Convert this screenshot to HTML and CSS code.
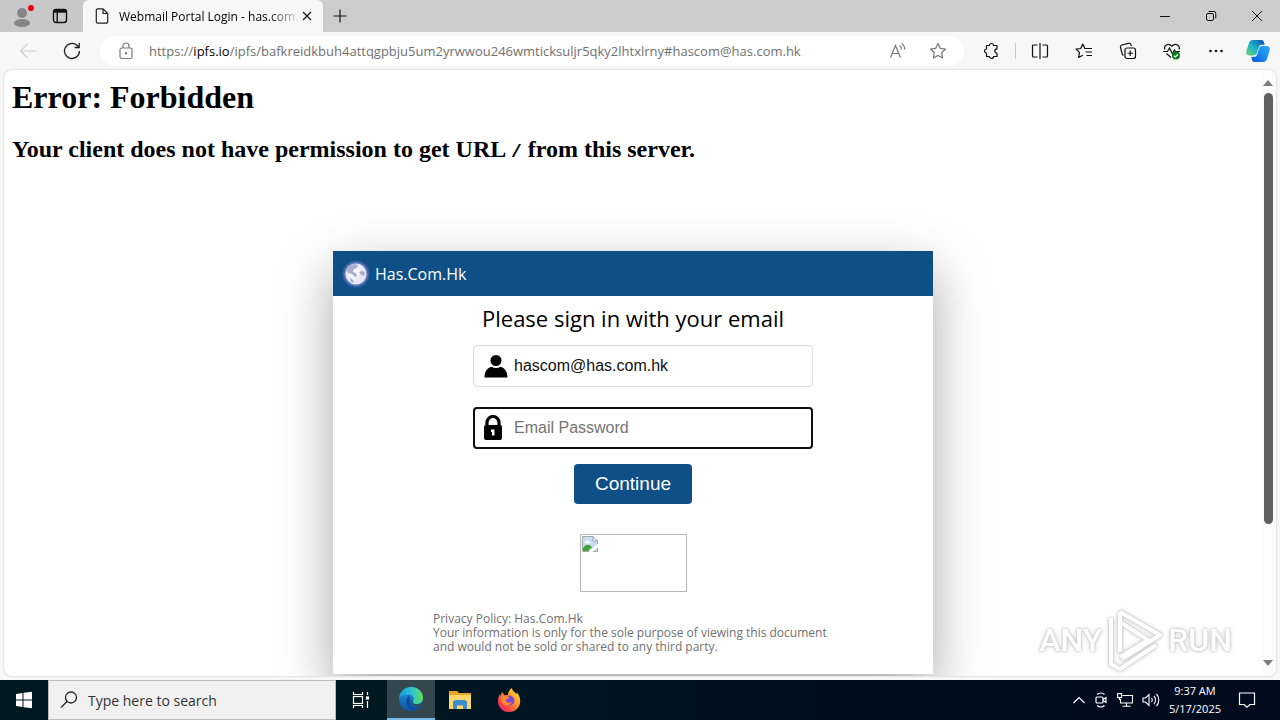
FILE: index.html
```html
<!DOCTYPE html>
<html lang="en">
<head>
<meta charset="utf-8">
<title>Webmail Portal Login - has.com.hk</title>
<link rel="stylesheet" href="styles.css">
</head>
<body>
<header class="tabbar">
  <div class="tab-tools">
    <button class="icon-btn" aria-label="Profile">
      <svg width="24" height="24" viewBox="0 0 24 24"><circle cx="12" cy="9" r="5" fill="#858585"/><ellipse cx="12" cy="19" rx="8" ry="4" fill="#858585"/><circle cx="21" cy="4" r="3" fill="#e3000f"/></svg>
    </button>
    <button class="icon-btn" aria-label="Tab actions">
      <svg width="16" height="16" viewBox="0 0 16 16" fill="none" stroke="#111" stroke-width="1.4"><rect x="1.5" y="1.5" width="13" height="13" rx="2.5"/><path d="M1.5 3.2h13" stroke-width="3"/><path d="M5.2 4v10"/></svg>
    </button>
  </div>
  <div class="tab">
    <svg width="14" height="16" viewBox="0 0 14 16" fill="none" stroke="#222" stroke-width="1.2"><path d="M2.8.8H8l4.7 4.7v7.7a2 2 0 0 1-2 2H2.8a1.5 1.5 0 0 1-1.5-1.5V2.3A1.5 1.5 0 0 1 2.8.8zM8 .8v4.7h4.7"/></svg>
    <span class="tab-title">Webmail Portal Login - has.com.</span>
    <button class="icon-btn" aria-label="Close tab"><svg width="10" height="10" viewBox="0 0 10 10" stroke="#111" stroke-width="1.2"><path d="M1 1l8 8M9 1L1 9"/></svg></button>
  </div>
  <button class="icon-btn new-tab" aria-label="New tab"><svg width="14" height="14" viewBox="0 0 14 14" stroke="#111" stroke-width="1.2"><path d="M7 .5v13M.5 7h13"/></svg></button>
  <div class="window-controls">
    <button class="icon-btn" aria-label="Minimize"><svg width="12" height="12" viewBox="0 0 12 12" stroke="#111"><path d="M1 6.5h10"/></svg></button>
    <button class="icon-btn" aria-label="Restore"><svg width="12" height="12" viewBox="0 0 12 12" fill="none" stroke="#111"><rect x="1.5" y="3.5" width="7" height="7" rx="1.5"/><path d="M3.5 1.5H9a1.8 1.8 0 0 1 1.8 1.8v5.2"/></svg></button>
    <button class="icon-btn" aria-label="Close window"><svg width="12" height="12" viewBox="0 0 12 12" stroke="#111"><path d="M1 1l10 10M11 1L1 11"/></svg></button>
  </div>
</header>

<nav class="toolbar" aria-label="Browser toolbar">
  <button class="icon-btn nav-btn" aria-label="Back"><svg width="18" height="16" viewBox="0 0 18 16" fill="none" stroke="#d0d0d0" stroke-width="1.2"><path d="M17 8H1.5M8.500 1l-7 7 7 7"/></svg></button>
  <button class="icon-btn nav-btn" aria-label="Refresh"><svg width="18" height="18" viewBox="0 0 18 18" fill="none" stroke="#222" stroke-width="1.3"><path d="M16.5 9A7.5 7.5 0 1 1 13.9 3.3L16 5.3M16.2 1v4.5h-4.6"/></svg></button>
  <div class="address">
    <svg width="16" height="18" viewBox="0 0 16 18" fill="none" stroke="#777" stroke-width="1.2"><rect x="2" y="6" width="12" height="10.5" rx="1.8"/><path d="M5 6V4a3 3 0 0 1 6 0v2"/><circle cx="8" cy="11.3" r=".6" fill="#777"/></svg>
    <span class="url">https://<span class="host">ipfs.io</span>/ipfs/bafkreidkbuh4attqgpbju5um2yrwwou246wmticksuljr5qky2lhtxlrny#hascom@has.com.hk</span>
    <button class="icon-btn" aria-label="Read aloud"><svg width="18" height="18" viewBox="0 0 18 18" fill="none" stroke="#777" stroke-width="1.2"><path d="M1.500 15.500L6.500 3.500l5 12M3.200 11.500h6.600M10.500 3.500a4.500 4.500 0 0 1 2 4M12.500 1.500a7 7 0 0 1 3.200 6"/></svg></button>
    <button class="icon-btn" aria-label="Add to favorites"><svg width="18" height="18" viewBox="0 0 18 18" fill="none" stroke="#777" stroke-width="1.200" stroke-linejoin="round"><path d="M9 1.500l2.300 4.800 5.200.7-3.800 3.700.9 5.300L9 13.500 4.400 16l.9-5.300L1.500 7l5.200-.7z"/></svg></button>
  </div>
  <div class="actions">
    <button class="icon-btn" aria-label="Extensions"><svg width="18" height="18" viewBox="0 0 18 18" fill="none" stroke="#111" stroke-width="1.200" stroke-linejoin="round"><path d="M4.500 3.500h3a2 2 0 0 1 4 0h3.500v3.300a2.200 2.200 0 0 0 0 4.400v3.300h-3.500a2 2 0 0 1-4 0h-3V11a2 2 0 0 1 0-4z"/></svg></button>
    <span class="divider"></span>
    <button class="icon-btn" aria-label="Split screen"><svg width="18" height="18" viewBox="0 0 18 18" fill="none" stroke="#111" stroke-width="1.200"><path d="M6.500 3h-4a1 1 0 0 0-1 1v10a1 1 0 0 0 1 1h4M11.500 3h4a1 1 0 0 1 1 1v10a1 1 0 0 1-1 1h-4M9 1v16"/></svg></button>
    <button class="icon-btn" aria-label="Favorites"><svg width="18" height="18" viewBox="0 0 18 18" fill="none" stroke="#111" stroke-width="1.200" stroke-linejoin="round"><path d="M11.500 6.500h-1.700L7.800 2 5.700 6.500l-4.700.6 3.500 3.300-.9 5.100 4.200-2.300M11.500 6.500H17M10.500 10H17M11.500 13.500H17"/></svg></button>
    <button class="icon-btn" aria-label="Collections"><svg width="18" height="18" viewBox="0 0 18 18" fill="none" stroke="#111" stroke-width="1.200"><rect x="6" y="6" width="10.500" height="10.500" rx="2"/><path d="M11.250 8.500v5.500M8.500 11.250H14M4.500 13.500A2.500 2.500 0 0 1 3.200 12L1.500 5.500A2 2 0 0 1 2.900 3l6.600-1.700A2 2 0 0 1 12 2.700l.4 1.500"/></svg></button>
    <button class="icon-btn" aria-label="Browser essentials"><svg width="18" height="18" viewBox="0 0 18 18" fill="none" stroke="#111" stroke-width="1.200"><path d="M1.700 7.500C.5 3.500 5 .5 8.700 4.200 12.500.5 17.500 3.500 16 7.500M3.500 11.500L8 15.500M0 9.500h4.500L6.500 6l3 6 2-4 1 1.500H17"/><circle cx="13" cy="13.500" r="4" fill="#137a1b" stroke="none"/><path d="M11 13.700l1.400 1.300 2.600-2.700" stroke="#fff"/></svg></button>
    <button class="icon-btn" aria-label="Settings and more"><svg width="18" height="18" viewBox="0 0 18 18" fill="#111"><circle cx="3.500" cy="9" r="1.300"/><circle cx="9" cy="9" r="1.300"/><circle cx="14.500" cy="9" r="1.300"/></svg></button>
    <button class="icon-btn" aria-label="Copilot"><svg width="24" height="24" viewBox="0 0 24 24">
      <defs><linearGradient id="cpA" x1="0" y1="1" x2="1" y2="0"><stop offset="0" stop-color="#6fd36a"/><stop offset=".45" stop-color="#1cb5c8"/><stop offset="1" stop-color="#0b4fae"/></linearGradient><linearGradient id="cpB" x1="0" y1="1" x2="1" y2="0"><stop offset="0" stop-color="#1050d8"/><stop offset=".5" stop-color="#178cf0"/><stop offset="1" stop-color="#30a8f6"/></linearGradient></defs>
      <path d="M7 1h8.500c1.500 0 2.200 1 2.600 2.500l.5 2.300h-2.800c-1.500 0-2.400.8-2.900 2.300l-2 6c-.6 1.700-1.500 2.400-3.200 2.400H3.500C.8 16.500-.4 14.500.4 12L3 4c.7-2 2-3 4-3z" fill="url(#cpA)"/>
      <path d="M17 23H8.500c-1.500 0-2.200-1-2.600-2.500l-.6-2.800h2.900c1.500 0 2.400-.8 2.900-2.300l2-6c.6-1.700 1.500-2.400 3.200-2.400h4.200c2.700 0 3.900 2 3.100 4.500L21 20c-.7 2-2 3-4 3z" fill="url(#cpB)"/></svg></button>
  </div>
</nav>

<div class="viewport">
  <main class="page">
    <h1>Error: Forbidden</h1>
    <h2>Your client does not have permission to get URL <code>/</code> from this server.</h2>
    <section class="dialog">
      <div class="dialog-bar">
        <svg width="28" height="28" viewBox="0 0 28 28"><defs><radialGradient id="halo"><stop offset=".72" stop-color="#7f86cf"/><stop offset="1" stop-color="#7f86cf" stop-opacity="0"/></radialGradient><radialGradient id="ball" cx=".4" cy=".4"><stop offset="0" stop-color="#fff"/><stop offset="1" stop-color="#e4e4f4"/></radialGradient></defs><circle cx="14" cy="14" r="14" fill="url(#halo)"/><circle cx="14" cy="14" r="10.500" fill="url(#ball)"/><path d="M12 4l4 1-1 3-3 1-1 3 3 1 1 3-2 1-3-3-4-1-2-3 2-4zM17 12l3-1 3 1-1 4-3-1zM8 18l3 2 1 3-3-1z" fill="#a9aece"/></svg>
        <span>Has.Com.Hk</span>
      </div>
      <div class="form">
        <p class="form-title">Please sign in with your email</p>
        <label class="field">
          <svg width="24" height="24" viewBox="0 0 24 24"><circle cx="12" cy="6.500" r="5.500"/><path d="M.5 23.500c0-6 3-10 7-10.800 2.800 1.800 6.200 1.800 9 0 4 .8 7 4.800 7 10.800z"/></svg>
          <input type="text" aria-label="Email" value="hascom@has.com.hk">
        </label>
        <label class="field field-active">
          <svg width="20" height="26" viewBox="0 0 20 26"><path d="M4 12V7.500a6 6 0 0 1 12 0V12" fill="none" stroke="#000" stroke-width="3.200"/><rect x="1" y="10" width="18" height="15" rx="2"/><path d="M8 14.500h3.500v6H9v-3.500H8z" fill="#fff"/></svg>
          <input type="password" aria-label="Email Password" placeholder="Email Password">
        </label>
        <button type="button" class="submit">Continue</button>
        <div class="missing" role="img" aria-label="Missing picture"><svg width="16" height="16" viewBox="0 0 16 16"><path d="M.5.5H11l4.500 4.500v10.500H.5z" fill="#c8dcf6" stroke="#a5a5a5"/><path d="M1 15v-3c3-4 6-4 9-1l-4 4z" fill="#43a536"/><path d="M3 6.500c0-2 3-3 4-1 2 0 2 2 0 2H3.500z" fill="#fff"/><path d="M11 .5V5h4.500z" fill="#fff" stroke="#a5a5a5"/><path d="M6.500 16L16 7.500v3.500L10.500 16z" fill="#fff"/></svg></div>
      </div>
      <p class="policy">Privacy Policy: Has.Com.Hk<br>Your information is only for the sole purpose of viewing this document<br>and would not be sold or shared to any third party.</p>
    </section>
    <div class="watermark">
      <span>ANY</span>
      <svg width="58" height="64" viewBox="0 0 58 64" fill="none" stroke="#fff" stroke-width="4" stroke-linejoin="round"><path d="M14 4v40M14 4l40 23-38 24M5 10v46l9 5 36-24M14 14l28 18-28 17"/></svg>
      <span>RUN</span>
    </div>
  </main>
  <div class="scrollbar" aria-hidden="true">
    <svg width="10" height="6" viewBox="0 0 10 6"><path d="M5 0l5 6H0z" fill="#7c7c7c"/></svg>
    <div class="track"><div class="thumb"></div></div>
    <svg width="10" height="6" viewBox="0 0 10 6"><path d="M0 0h10L5 6z" fill="#7c7c7c"/></svg>
  </div>
</div>

<footer class="taskbar">
  <button class="icon-btn task" aria-label="Start"><svg width="18" height="18" viewBox="0 0 18 18" fill="#fff"><path d="M1 3l6.500-1v6.500H1zM8.500 1.800L17 .7v7.800H8.500zM1 9.500h6.500V16L1 15zM8.500 9.500H17v7.800l-8.500-1.100z"/></svg></button>
  <label class="search">
    <svg width="18" height="18" viewBox="0 0 18 18" fill="none" stroke="#222" stroke-width="1.300"><circle cx="11" cy="6.500" r="5.500"/><path d="M7 10.500L1 16.500"/></svg>
    <input type="text" placeholder="Type here to search" aria-label="Search">
  </label>
  <button class="icon-btn task" aria-label="Task view"><svg width="18" height="16" viewBox="0 0 18 16" fill="none" stroke="#fff" stroke-width="1.200"><path d="M1.500 0v2.500h9V0M1.500 16v-2.500h9V16M15.500 0v3M15.500 9v7"/><rect x="1.500" y="4.500" width="9" height="7"/><rect x="14.500" y="5" width="2" height="2" fill="#fff"/></svg></button>
  <button class="icon-btn task task-active" aria-label="Edge"><svg width="24" height="24" viewBox="0 0 24 24"><defs><linearGradient id="eTop"><stop offset="0" stop-color="#1a9bdc"/><stop offset=".55" stop-color="#2cc5cf"/><stop offset="1" stop-color="#66dd50"/></linearGradient><linearGradient id="eLow" x1="0" y1="0" x2="0" y2="1"><stop offset="0" stop-color="#1f9de8"/><stop offset="1" stop-color="#0b52a5"/></linearGradient></defs><circle cx="12" cy="12" r="12" fill="url(#eLow)"/><path d="M.2 10C1.500 4 6.500 0 12 0c7 0 12 5 12 10.500 0 4-3 6.500-6.500 6.500-3 0-4.500-1.500-3.500-2.800 2-2.700.5-6.700-4-6.700C5 7.500 1.500 9 .2 10z" fill="url(#eTop)"/><path d="M10 8.500c-4 3-3.500 10 1 13 3 2 7 1.500 10-1.500-5 2-11.500-1-10-7z" fill="#0f4b91"/><path d="M14 14.200c-1 1.500.5 3.200 4 3.200 2 0 3.800-.7 5-2L21.500 19c-4 1.500-10-.5-9.500-5.500z" fill="#34474f"/></svg></button>
  <button class="icon-btn task" aria-label="File Explorer"><svg width="24" height="20" viewBox="0 0 24 20"><path d="M1 1h8l2 2h12v16H1z" fill="#e5a52d"/><path d="M1 5h22v14H1z" fill="#fcd667"/><path d="M5 19v-7.500l2-1.500h10l2 1.500V19h-4v-3.500H9V19z" fill="#3d8ed0"/></svg></button>
  <button class="icon-btn task" aria-label="Firefox"><svg width="24" height="24" viewBox="0 0 24 24"><defs><linearGradient id="fx" x1="1" y1="0" x2="0" y2="1"><stop offset="0" stop-color="#fff44f"/><stop offset=".4" stop-color="#ff9a22"/><stop offset=".75" stop-color="#ff3d4e"/><stop offset="1" stop-color="#e31587"/></linearGradient></defs><path d="M12 24C5 24 1 19 1 13c0-3 1-5 2-7l.5 2L5 4l2.500 3.200L11 7c0-3 1.500-5.500 4-7 0 3 3 4 4.500 6l.5-1.500c2 2.500 3.200 5.500 3.200 8.500C23.200 19 19 24 12 24z" fill="url(#fx)"/><circle cx="12.500" cy="12.500" r="5" fill="#8347d8"/><path d="M4.500 9c3-2 5-1.500 8 .3-1 1.700-3 1.500-3.700 2.700 0 2.500 3 3.500 6 2-1 3-4.500 4-7.300 3C5 16 4 12.500 4.500 9z" fill="#ff8a2a"/></svg></button>
  <div class="tray">
    <svg width="12" height="8" viewBox="0 0 12 8" fill="none" stroke="#fff" stroke-width="1.200"><path d="M.5 7L6 1.500 11.500 7"/></svg>
    <svg width="14" height="16" viewBox="0 0 14 16" fill="none" stroke="#fff" stroke-width="1.200"><rect x="2" y="5" width="7" height="6" rx="1"/><path d="M9 7.500l3-2v5l-3-2M3 2.500c2-2 5.500-2 7.500 0M3 13.500c2 2 5.500 2 7.500 0"/></svg>
    <svg width="16" height="14" viewBox="0 0 16 14" fill="none" stroke="#fff" stroke-width="1.100"><path d="M5.500 2.500h10v7.500h-12V6M9.500 10v3M5.500 13.300h8"/><rect x=".6" y=".6" width="4" height="4"/><path d="M2.500 4.500V7"/></svg>
    <svg width="18" height="14" viewBox="0 0 18 14" fill="none" stroke="#fff" stroke-width="1.100"><path d="M1 5h2.500L7 1.500v11L3.500 9H1zM9.500 5c1 1 1 3 0 4M12 3c2 2 2 6 0 8M14.500 1c3 3 3 9 0 12"/></svg>
    <time class="clock"><span>9:37 AM</span><span>5/17/2025</span></time>
    <svg width="18" height="18" viewBox="0 0 18 18" fill="none" stroke="#fff" stroke-width="1.200"><path d="M1.500 2h15v11.500H12L9 16.300l-3-2.800H1.500z"/></svg>
  </div>
</footer>
</body>
</html>
```
FILE: styles.css
```css
* { box-sizing: border-box; }
body {
  margin: 0;
  height: 100vh;
  display: flex;
  flex-direction: column;
  overflow: hidden;
  background: #f7f7f7;
  font-family: "Open Sans", "Noto Sans", sans-serif;
  color: #000;
}
svg { display: block; flex: none; }
.icon-btn {
  display: flex;
  align-items: center;
  justify-content: center;
  flex: none;
  padding: 0;
  border: 0;
  background: none;
}
.tabbar { display: flex; flex: none; height: 32px; background: #ccc; }
.tab-tools {
  display: flex;
  align-items: center;
  gap: 18px;
  width: 83px;
  padding-left: 10px;
  background: #c8c8c8;
  border-radius: 0 0 6px 0;
}
.tab {
  display: flex;
  align-items: center;
  width: 240px;
  padding: 0 11px 0 12px;
  background: #f7f7f7;
  border-radius: 6px 6px 0 0;
}
.tab-title {
  flex: 1;
  min-width: 0;
  margin: 0 1px 0 10px;
  overflow: hidden;
  white-space: nowrap;
  font-size: 12px;
  mask-image: linear-gradient(to right, #000 82%, transparent);
}
.new-tab { width: 34px; }
.window-controls { display: flex; margin-left: auto; }
.window-controls .icon-btn { width: 46px; }

.toolbar { display: flex; flex: none; align-items: center; height: 38px; padding: 0 10px 0 6px; }
.nav-btn { width: 44px; }
.address {
  display: flex;
  flex: 1;
  align-items: center;
  gap: 22px;
  min-width: 0;
  height: 30px;
  margin: 0 18px 0 6px;
  padding: 0 17px 0 18px;
  border-radius: 15px;
  background: #fff;
}
.url { flex: 1; min-width: 0; margin-left: -7px; overflow: hidden; white-space: nowrap; font-size: 13px; color: #707070; }
.host { color: #000; }
.actions { display: flex; align-items: center; gap: 26px; }
.divider { width: 1px; height: 16px; margin: 0 -11px; background: #c8c8c8; }
.actions .icon-btn:last-child { margin-left: -5px; }

.viewport {
  display: flex;
  flex: 1;
  min-height: 0;
  margin: 0 4px 4px;
  overflow: hidden;
  border-radius: 8px;
  background: #fff;
  box-shadow: 0 0 2px #b5b5b5;
}
.page { position: relative; display: flex; flex: 1; flex-direction: column; min-width: 0; padding: 8px 8px 2px; overflow: hidden; }
h1, h2 { margin: 0; font-family: "Liberation Serif", "Times New Roman", serif; }
h1 { font-size: 32px; line-height: 38px; }
h2 { margin-top: 19px; font-size: 24px; line-height: 28px; }
code { font-family: "Liberation Mono", monospace; font-size: 18px; }

.dialog {
  display: flex;
  flex: 1;
  flex-direction: column;
  align-self: center;
  width: 100%;
  max-width: 600px;
  margin-top: 85px;
  background: #fff;
  box-shadow: 0 20px 50px rgba(0, 0, 0, 0.35);
}
.dialog-bar {
  display: flex;
  align-items: center;
  gap: 5px;
  height: 45px;
  padding: 0 9px;
  background: #0e4f88;
  color: #fff;
  font-size: 16px;
}
.form { display: flex; flex-direction: column; align-items: center; }
.form-title { margin: 7px 0 12px; font-size: 22px; line-height: 30px; }
.field {
  display: flex;
  align-items: center;
  width: 340px;
  height: 42px;
  margin: 0 0 20px 20px;
  padding: 0 10px;
  border: 1px solid #dcdcdc;
  border-radius: 4px;
}
.field svg { margin-right: 6px; }
.field input {
  flex: 1;
  min-width: 0;
  padding: 0;
  border: 0;
  outline: 0;
  background: none;
  font: 16px "Liberation Sans", Arial, sans-serif;
  color: #111;
}
.field input::placeholder { color: #757575; }
.field-active { margin-bottom: 15px; padding: 0 8px; border: 2px solid #101010; }
.field-active svg { margin-right: 11px; }
.submit {
  width: 118px;
  height: 40px;
  border: 0;
  border-radius: 4px;
  background: #0e4f88;
  color: #fff;
  font: 19px "Liberation Sans", Arial, sans-serif;
}
.missing { width: 107px; height: 58px; margin-top: 30px; padding: 1px; border: 1px solid #b8b8b8; }
.policy { margin: 20px 0 0 100px; font-size: 12px; line-height: 14px; color: #707070; }

.watermark {
  position: absolute;
  right: 30px;
  bottom: 4px;
  display: flex;
  align-items: center;
  gap: 4px;
  color: #fff;
  font: 500 32px Roboto, "Liberation Sans", sans-serif;
  filter: drop-shadow(0 0 1px #bbb) drop-shadow(0 0 2px #d5d5d5);
}
.scrollbar { display: flex; flex: none; flex-direction: column; align-items: center; gap: 7px; width: 14px; padding: 10px 2px 10px 0; background: #fcfcfc; }
.track { flex: 1; width: 9px; }
.thumb { height: 77%; border-radius: 5px; background: #606060; }

.taskbar { display: flex; flex: none; height: 40px; background: linear-gradient(to right, #001820 30%, #000d20 65%, #000b1e); }
.task { width: 49px; }
.task:first-child, .task-active { width: 48px; }
.task-active { margin-left: 2px; background: #34474f; border-bottom: 2px solid #76b9ed; }
.search { display: flex; align-items: center; gap: 10px; width: 288px; padding: 0 11px; border: 1px solid #bbb; background: #f1f1f1; }
.search input { flex: 1; min-width: 0; padding: 0; border: 0; outline: 0; background: none; font: 14px "Open Sans", sans-serif; }
.search input::placeholder { color: #333; }
.tray { display: flex; align-items: center; gap: 9px; margin-left: auto; padding-right: 24px; color: #fff; }
.clock { display: flex; flex-direction: column; align-items: center; margin-right: 8px; font-size: 11px; line-height: 18px; }
```
